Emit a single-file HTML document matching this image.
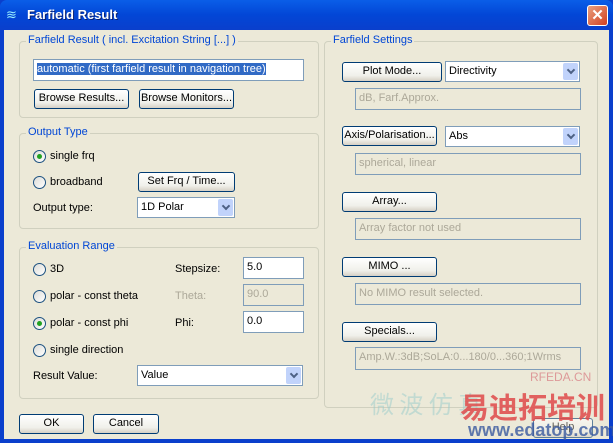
<!DOCTYPE html><html><head><style>
*{box-sizing:border-box;margin:0;padding:0}
body{width:613px;height:443px;overflow:hidden;font-family:"Liberation Sans",sans-serif;font-size:11px;color:#000;background:#0a3fcc}
.win{position:absolute;left:0;top:0;width:613px;height:443px;background:linear-gradient(#0a5ee8,#0246d6 15px,#0a3fcc 30px);border-radius:7px 7px 0 0;overflow:hidden}
.cl{position:absolute;left:4px;top:30px;width:605px;height:409px;background:#ece9d8}
.title{position:absolute;left:27px;top:7px;color:#fff;font-weight:bold;font-size:13px;text-shadow:1px 1px #0a2070}
.x{position:absolute;left:587px;top:5px;width:21px;height:21px;border:1px solid #fff;border-radius:3px;background:linear-gradient(135deg,#e8a080,#d44020);color:#fff;font-weight:bold;font-size:15px;text-align:center;line-height:19px}
.a{position:absolute;white-space:nowrap}
.g{position:absolute;border:1px solid #d0d0bf;border-radius:4px}
.gl{position:absolute;background:#ece9d8;padding:0 2px;color:#0046d5}
.b{position:absolute;border:1px solid #003c74;border-radius:3px;background:linear-gradient(#fff,#f0f0ea 70%,#d6d0c5);text-align:center;line-height:17px}
.in{position:absolute;border:1px solid #7f9db9;background:#fff;padding-left:3px;line-height:19px}
.dis{position:absolute;border:1px solid #7f9db9;background:#ece9d8;color:#aca899;padding-left:3px;line-height:19px;white-space:nowrap;overflow:hidden}
.cb{position:absolute;border:1px solid #7f9db9;background:#fff;padding-left:3px;line-height:19px}
.cb:after{content:"";position:absolute;right:1px;top:1px;width:15px;height:17px;background:#c1d3fb;border-radius:2px}
.cb i{position:absolute;right:5px;top:5px;width:6px;height:6px;border-right:2px solid #4d6185;border-bottom:2px solid #4d6185;transform:rotate(45deg);z-index:2}
.r{position:absolute;width:13px;height:13px;border:1px solid #1c5180;border-radius:50%;background:linear-gradient(135deg,#dcdcd7,#fff)}
.r.on:after{content:"";position:absolute;left:3px;top:3px;width:5px;height:5px;border-radius:50%;background:#21a121}
</style></head><body><div class="win">
<div class="a" style="left:6px;top:8px;width:16px;height:14px;color:#9ef;font-size:13px;line-height:14px">≋</div>
<div class="title">Farfield Result</div>
<div class="x">✕</div>
<div class="cl"></div>

<div class="g" style="left:19px;top:41px;width:300px;height:77px"></div>
<div class="gl" style="left:26px;top:34px">Farfield Result ( incl. Excitation String [...] )</div>
<div class="in" style="left:33px;top:59px;width:271px;height:22px"><span style="background:#316ac5;color:#fff">automatic (first farfield result in navigation tree)</span></div>
<div class="b" style="left:34px;top:89px;width:95px;height:20px">Browse Results...</div>
<div class="b" style="left:139px;top:89px;width:95px;height:20px">Browse Monitors...</div>

<div class="g" style="left:19px;top:133px;width:300px;height:96px"></div>
<div class="gl" style="left:26px;top:126px">Output Type</div>
<div class="r on" style="left:33px;top:150px"></div><div class="a" style="left:50px;top:150px">single frq</div>
<div class="r" style="left:33px;top:176px"></div><div class="a" style="left:50px;top:176px">broadband</div>
<div class="b" style="left:138px;top:172px;width:97px;height:20px">Set Frq / Time...</div>
<div class="a" style="left:33px;top:202px">Output type:</div>
<div class="cb" style="left:137px;top:197px;width:98px;height:21px">1D Polar<i></i></div>

<div class="g" style="left:19px;top:247px;width:300px;height:152px"></div>
<div class="gl" style="left:26px;top:240px">Evaluation Range</div>
<div class="r" style="left:33px;top:263px"></div><div class="a" style="left:50px;top:263px">3D</div>
<div class="r" style="left:33px;top:290px"></div><div class="a" style="left:50px;top:290px">polar - const theta</div>
<div class="r on" style="left:33px;top:317px"></div><div class="a" style="left:50px;top:317px">polar - const phi</div>
<div class="r" style="left:33px;top:344px"></div><div class="a" style="left:50px;top:344px">single direction</div>
<div class="a" style="left:175px;top:263px">Stepsize:</div>
<div class="a" style="left:175px;top:290px;color:#aca899">Theta:</div>
<div class="a" style="left:175px;top:317px">Phi:</div>
<div class="in" style="left:243px;top:257px;width:61px;height:22px">5.0</div>
<div class="dis" style="left:243px;top:284px;width:61px;height:22px">90.0</div>
<div class="in" style="left:243px;top:311px;width:61px;height:22px">0.0</div>
<div class="a" style="left:33px;top:370px">Result Value:</div>
<div class="cb" style="left:137px;top:365px;width:166px;height:21px">Value<i></i></div>

<div class="b" style="left:19px;top:414px;width:65px;height:20px">OK</div>
<div class="b" style="left:93px;top:414px;width:66px;height:20px">Cancel</div>

<div class="g" style="left:324px;top:41px;width:274px;height:367px"></div>
<div class="gl" style="left:331px;top:34px">Farfield Settings</div>
<div class="b" style="left:342px;top:62px;width:100px;height:20px">Plot Mode...</div>
<div class="cb" style="left:445px;top:61px;width:135px;height:21px">Directivity<i></i></div>
<div class="dis" style="left:355px;top:88px;width:226px;height:22px">dB, Farf.Approx.</div>
<div class="b" style="left:342px;top:126px;width:95px;height:20px">Axis/Polarisation...</div>
<div class="cb" style="left:445px;top:126px;width:135px;height:21px">Abs<i></i></div>
<div class="dis" style="left:355px;top:153px;width:226px;height:22px">spherical, linear</div>
<div class="b" style="left:342px;top:192px;width:95px;height:20px">Array...</div>
<div class="dis" style="left:355px;top:218px;width:226px;height:22px">Array factor not used</div>
<div class="b" style="left:342px;top:257px;width:95px;height:20px">MIMO ...</div>
<div class="dis" style="left:355px;top:283px;width:226px;height:22px">No MIMO result selected.</div>
<div class="b" style="left:342px;top:322px;width:95px;height:20px">Specials...</div>
<div class="dis" style="left:355px;top:347px;width:226px;height:23px">Amp.W.:3dB;SoLA:0...180/0...360;1Wrms</div>

<div class="a" style="left:530px;top:370px;color:#d99;font-size:12px">RFEDA.CN</div>
<div class="a" style="left:370px;top:385px;color:#9cc;font-size:24px;font-family:'Noto Sans CJK SC',sans-serif;opacity:.5">微 波 仿 真</div>
<div class="b" style="left:533px;top:418px;width:60px;height:20px;opacity:.6">Help</div>
<div class="a" style="left:460px;top:390px;color:#e04a4a;font-size:29px;font-weight:bold;font-family:'Noto Sans CJK SC',sans-serif;line-height:32px;opacity:.85">易迪拓培训</div>
<div class="a" style="left:468px;top:420px;color:#3a5aa0;font-size:18px;font-weight:bold;opacity:.8">www.edatop.com</div>
</div></body></html>
